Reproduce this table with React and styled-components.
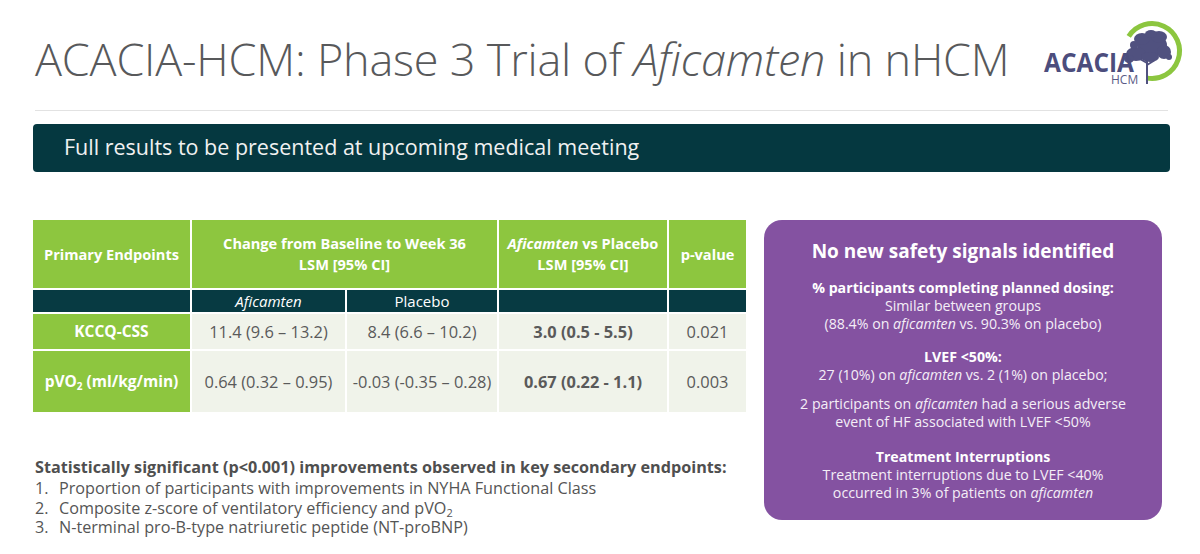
import styled, { createGlobalStyle } from "styled-components";

const GlobalStyle = createGlobalStyle`
  html, body {
    margin: 0;
    padding: 0;
    background: #ffffff;
  }
  body {
    font-family: "Open Sans", "DejaVu Sans", sans-serif;
    color: #555555;
  }
`;

const Slide = styled.div`
  width: 1200px;
  height: 554px;
  box-sizing: border-box;
  padding: 0 30px 0 33px;
  overflow: hidden;
  background: #fff;
`;

const Header = styled.header`
  height: 110px;
  display: flex;
  align-items: flex-start;
  justify-content: space-between;
  border-bottom: 1px solid #e2e2e2;
  margin-right: 2px;
  margin-left: 2px;
`;

const Title = styled.h1`
  margin: 32px 0 0 0;
  font-size: 45px;
  font-weight: 300;
  line-height: 1.2;
  color: #58595b;
  letter-spacing: -0.2px;
  white-space: nowrap;

  em {
    font-style: italic;
  }
`;

const LogoBox = styled.div`
  margin: 15px -17px 0 0;
  width: 145px;
  height: 75px;
`;

const Banner = styled.div`
  margin-top: 13px;
  height: 48px;
  border-radius: 4px;
  background: #053840;
  color: #f1f1f1;
  display: flex;
  align-items: center;
  padding-left: 31px;
  padding-bottom: 3px;
  box-sizing: border-box;
  font-size: 21.5px;
  font-weight: 400;
`;

const Main = styled.div`
  margin-top: 48px;
  display: flex;
  gap: 18px;
  align-items: flex-start;
`;

const LeftColumn = styled.div`
  width: 713px;
  display: flex;
  flex-direction: column;
`;

const Grid = styled.div`
  display: grid;
  grid-template-columns: 157px 153px 150px 168px 77px;
  grid-template-rows: 68px 22px 35px 61px;
  gap: 2px;
`;

const Cell = styled.div`
  display: flex;
  align-items: center;
  justify-content: center;
  text-align: center;
  grid-column: ${(p) => p.$span || "auto"};
  background: ${(p) =>
    p.$kind === "dark" ? "#073a42" : p.$kind === "body" ? "#f0f3ea" : "#8dc63f"};
  color: ${(p) => (p.$kind === "body" ? "#5a5a5a" : "#ffffff")};
  font-size: ${(p) =>
    p.$kind === "body"
      ? "16.4px"
      : p.$kind === "dark"
      ? "15px"
      : p.$kind === "label"
      ? "15.5px"
      : "14.6px"};
  font-weight: ${(p) =>
    p.$kind === "head" || p.$kind === "label" || p.$bold ? 700 : 400};
  line-height: 21px;

  em {
    font-style: italic;
  }
  sub {
    font-size: 10px;
    line-height: 0;
    vertical-align: -3px;
  }
`;

const Secondary = styled.div`
  margin-top: 46px;
  font-size: 16.2px;
  line-height: 19.3px;
  color: #555555;
`;

const SecondaryHead = styled.div`
  font-weight: 700;
  color: #4f4f4f;
  margin-left: 2px;
`;

const List = styled.ol`
  margin: 2px 0 0 0;
  padding: 0 0 0 2px;
  list-style: none;
  counter-reset: item;

  sub {
    font-size: 11px;
    line-height: 0;
    vertical-align: -3px;
  }
`;

const Item = styled.li`
  display: flex;
  counter-increment: item;

  &::before {
    content: counter(item) ".";
    width: 24px;
    flex: none;
  }
`;

const SafetyBox = styled.aside`
  width: 398px;
  height: 300px;
  box-sizing: border-box;
  border-radius: 18px;
  background: #8452a1;
  color: #ffffff;
  text-align: center;
  padding-top: 17px;
`;

const SafetyTitle = styled.h2`
  margin: 0 0 14px 0;
  font-size: 19px;
  font-weight: 700;
  line-height: 28px;
`;

const Block = styled.div`
  margin-top: ${(p) => p.$gap || "0px"};
  font-size: 14.2px;
  line-height: 18px;
  color: #f4eef7;

  strong {
    color: #ffffff;
    font-weight: 700;
  }
  em {
    font-style: italic;
  }
`;

const Logo = () => (
  <svg width="145" height="75" viewBox="0 0 145 75">
    <path
      d="M 88.7 21.4 A 27.5 27.5 0 1 1 106.3 62.9"
      fill="none"
      stroke="#8cc63f"
      strokeWidth="5"
    />
    <g fill="#50517f">
      <ellipse cx="112" cy="30" rx="15" ry="11" />
      <ellipse cx="102" cy="24" rx="8" ry="6" />
      <ellipse cx="119" cy="22" rx="8" ry="6" />
      <ellipse cx="111" cy="19" rx="6" ry="4" />
      <ellipse cx="124" cy="37" rx="7" ry="7" />
      <ellipse cx="96" cy="39" rx="10" ry="7" />
      <ellipse cx="89" cy="44" rx="5" ry="4" />
      <ellipse cx="110" cy="42" rx="9" ry="5" />
      <circle cx="129" cy="42" r="3" />
      <circle cx="94" cy="30" r="4" />
    </g>
    <path
      d="M 107 40 L 107 69 M 107 48 L 100 44 M 107 50 L 115 45"
      stroke="#50517f"
      strokeWidth="2"
      fill="none"
    />
    <text
      x="4"
      y="57"
      fontFamily="'Open Sans', sans-serif"
      fontWeight="700"
      fontSize="26"
      fill="#4c4d7d"
      textLength="90"
      lengthAdjust="spacingAndGlyphs"
    >
      ACACIA
    </text>
    <text
      x="71"
      y="69"
      fontFamily="'Open Sans', sans-serif"
      fontSize="12"
      fill="#5a5b86"
    >
      HCM
    </text>
  </svg>
);

const App = () => {
  return (
    <>
      <GlobalStyle />
      <Slide>
        <Header>
          <Title>
            ACACIA-HCM: Phase 3 Trial of <em>Aficamten</em> in nHCM
          </Title>
          <LogoBox>
            <Logo />
          </LogoBox>
        </Header>
        <Banner>Full results to be presented at upcoming medical meeting</Banner>
        <Main>
          <LeftColumn>
            <Grid>
              <Cell $kind="head">Primary Endpoints</Cell>
              <Cell $kind="head" $span="span 2">
                Change from Baseline to Week 36
                <br />
                LSM [95% CI]
              </Cell>
              <Cell $kind="head">
                <span>
                  <em>Aficamten</em> vs Placebo
                  <br />
                  LSM [95% CI]
                </span>
              </Cell>
              <Cell $kind="head">p-value</Cell>

              <Cell $kind="dark" />
              <Cell $kind="dark">
                <em>Aficamten</em>
              </Cell>
              <Cell $kind="dark">Placebo</Cell>
              <Cell $kind="dark" />
              <Cell $kind="dark" />

              <Cell $kind="label">KCCQ-CSS</Cell>
              <Cell $kind="body">11.4 (9.6 – 13.2)</Cell>
              <Cell $kind="body">8.4 (6.6 – 10.2)</Cell>
              <Cell $kind="body" $bold>
                3.0 (0.5 - 5.5)
              </Cell>
              <Cell $kind="body">0.021</Cell>

              <Cell $kind="label">
                <span>
                  pVO<sub>2</sub> (ml/kg/min)
                </span>
              </Cell>
              <Cell $kind="body">0.64 (0.32 – 0.95)</Cell>
              <Cell $kind="body">-0.03 (-0.35 – 0.28)</Cell>
              <Cell $kind="body" $bold>
                0.67 (0.22 - 1.1)
              </Cell>
              <Cell $kind="body">0.003</Cell>
            </Grid>
            <Secondary>
              <SecondaryHead>
                Statistically significant (p&lt;0.001) improvements observed in key secondary endpoints:
              </SecondaryHead>
              <List>
                <Item>Proportion of participants with improvements in NYHA Functional Class</Item>
                <Item>
                  <span>
                    Composite z-score of ventilatory efficiency and pVO<sub>2</sub>
                  </span>
                </Item>
                <Item>N-terminal pro-B-type natriuretic peptide (NT-proBNP)</Item>
              </List>
            </Secondary>
          </LeftColumn>
          <SafetyBox>
            <SafetyTitle>No new safety signals identified</SafetyTitle>
            <Block>
              <strong>% participants completing planned dosing:</strong>
              <br />
              Similar between groups
              <br />
              (88.4% on <em>aficamten</em> vs. 90.3% on placebo)
            </Block>
            <Block $gap="15px">
              <strong>LVEF &lt;50%:</strong>
              <br />
              27 (10%) on <em>aficamten</em> vs. 2 (1%) on placebo;
            </Block>
            <Block $gap="11px">
              2 participants on <em>aficamten</em> had a serious adverse
              <br />
              event of HF associated with LVEF &lt;50%
            </Block>
            <Block $gap="17px">
              <strong>Treatment Interruptions</strong>
              <br />
              Treatment interruptions due to LVEF &lt;40%
              <br />
              occurred in 3% of patients on <em>aficamten</em>
            </Block>
          </SafetyBox>
        </Main>
      </Slide>
    </>
  );
};

export default App;
